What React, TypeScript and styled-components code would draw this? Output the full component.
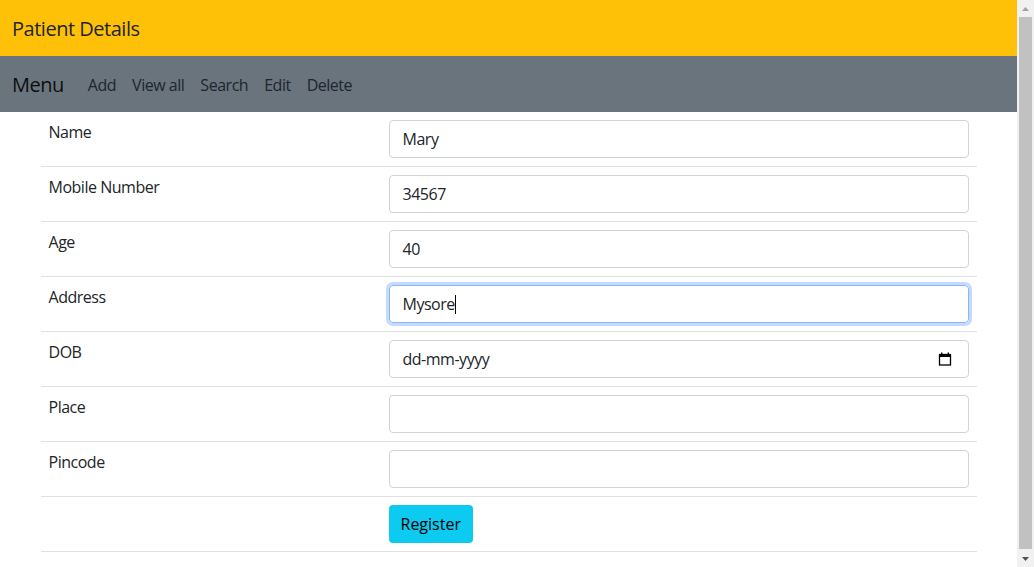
import React from 'react'
import styled, { createGlobalStyle } from 'styled-components'

const GlobalStyle = createGlobalStyle`
  body {
    margin: 0;
    font-family: "Open Sans", "Noto Sans", sans-serif;
    font-size: 16px;
    line-height: 1.5;
    letter-spacing: -0.03em;
    color: #212529;
    background: #fff;
  }
`

const Window = styled.div`
  display: flex;
  height: 100vh;
  overflow: hidden;
`

const Page = styled.div`
  flex: 1;
  min-width: 0;
  overflow: hidden;
`

const ScrollBar = styled.aside`
  width: 17px;
  flex: none;
  display: flex;
  flex-direction: column;
  background: #f1f1f1;
`

const ScrollButton = styled.div`
  height: 17px;
  flex: none;
  display: flex;
  align-items: center;
  justify-content: center;
`

const Thumb = styled.div`
  flex: 1;
  margin: 0 2px 1px;
  background: #c1c1c1;
`

const Header = styled.header`
  height: 56px;
  box-sizing: border-box;
  display: flex;
  align-items: center;
  padding: 2px 12px 0;
  background: #ffc107;
  font-size: 20px;
`

const Navbar = styled.nav`
  height: 56px;
  box-sizing: border-box;
  display: flex;
  align-items: center;
  padding: 1px 12px 0;
  background: #6a747c;
`

const Brand = styled.span`
  font-size: 20px;
  color: rgba(0, 0, 0, 0.9);
  margin-right: 16px;
`

const NavLink = styled.a`
  padding: 0 8px;
  color: #1c2530;
  text-decoration: none;
`

const Container = styled.main`
  max-width: 936px;
  margin: 0 auto 16px;
  padding: 0 12px;
`

const Row = styled.div`
  display: grid;
  grid-template-columns: 340px 1fr;
  border-bottom: 1px solid #dee2e6;
`

const Cell = styled.div`
  padding: 8px;
  min-height: 38px;
`

const Field = styled.div<{ $focused?: boolean }>`
  height: 38px;
  box-sizing: border-box;
  display: flex;
  align-items: center;
  padding: 0 13px;
  border: 1px solid ${p => (p.$focused ? '#86b7fe' : '#ced4da')};
  border-radius: 4px;
  box-shadow: ${p => (p.$focused ? '0 0 0 3px rgba(13, 110, 253, 0.25)' : 'none')};
  color: #212529;
`

const Caret = styled.span`
  display: inline-block;
  width: 1px;
  height: 19px;
  background: #000;
`

const CalendarIcon = styled.svg`
  margin-left: auto;
  margin-right: 3px;
`

const Button = styled.button`
  height: 38px;
  padding: 0 12px;
  border: 0;
  border-radius: 4px;
  background: #0dcaf0;
  color: #000;
  font: inherit;
`

const rows = [
  { label: 'Name', value: 'Mary' },
  { label: 'Mobile Number', value: '34567' },
  { label: 'Age', value: '40' },
  { label: 'Address', value: 'Mysore', focused: true },
  { label: 'DOB', value: 'dd-mm-yyyy', date: true },
  { label: 'Place', value: '' },
  { label: 'Pincode', value: '' },
]

const App = () => {
  return (
    <Window>
      <GlobalStyle />
      <Page>
        <Header>Patient Details</Header>
        <Navbar>
          <Brand>Menu</Brand>
          <NavLink>Add</NavLink>
          <NavLink>View all</NavLink>
          <NavLink>Search</NavLink>
          <NavLink>Edit</NavLink>
          <NavLink>Delete</NavLink>
        </Navbar>
        <Container>
          {rows.map(r => (
            <Row key={r.label}>
              <Cell>{r.label}</Cell>
              <Cell>
                <Field $focused={r.focused}>
                  {r.value}
                  {r.focused && <Caret />}
                  {r.date && (
                    <CalendarIcon width="14" height="14" viewBox="0 0 14 14">
                      <rect x="1.5" y="2.5" width="11" height="10.5" fill="none" stroke="#000" strokeWidth="1.3" />
                      <rect x="1" y="2" width="12" height="3" fill="#000" />
                      <rect x="3" y="0.5" width="1.4" height="2" fill="#000" />
                      <rect x="9.6" y="0.5" width="1.4" height="2" fill="#000" />
                    </CalendarIcon>
                  )}
                </Field>
              </Cell>
            </Row>
          ))}
          <Row>
            <Cell />
            <Cell>
              <Button>Register</Button>
            </Cell>
          </Row>
        </Container>
      </Page>
      <ScrollBar>
        <ScrollButton>
          <svg width="7" height="4" viewBox="0 0 7 4"><polygon points="3.5,0 7,4 0,4" fill="#a3a3a3" /></svg>
        </ScrollButton>
        <Thumb />
        <ScrollButton>
          <svg width="7" height="4" viewBox="0 0 7 4"><polygon points="0,0 7,0 3.5,4" fill="#505050" /></svg>
        </ScrollButton>
      </ScrollBar>
    </Window>
  )
}

export default App
